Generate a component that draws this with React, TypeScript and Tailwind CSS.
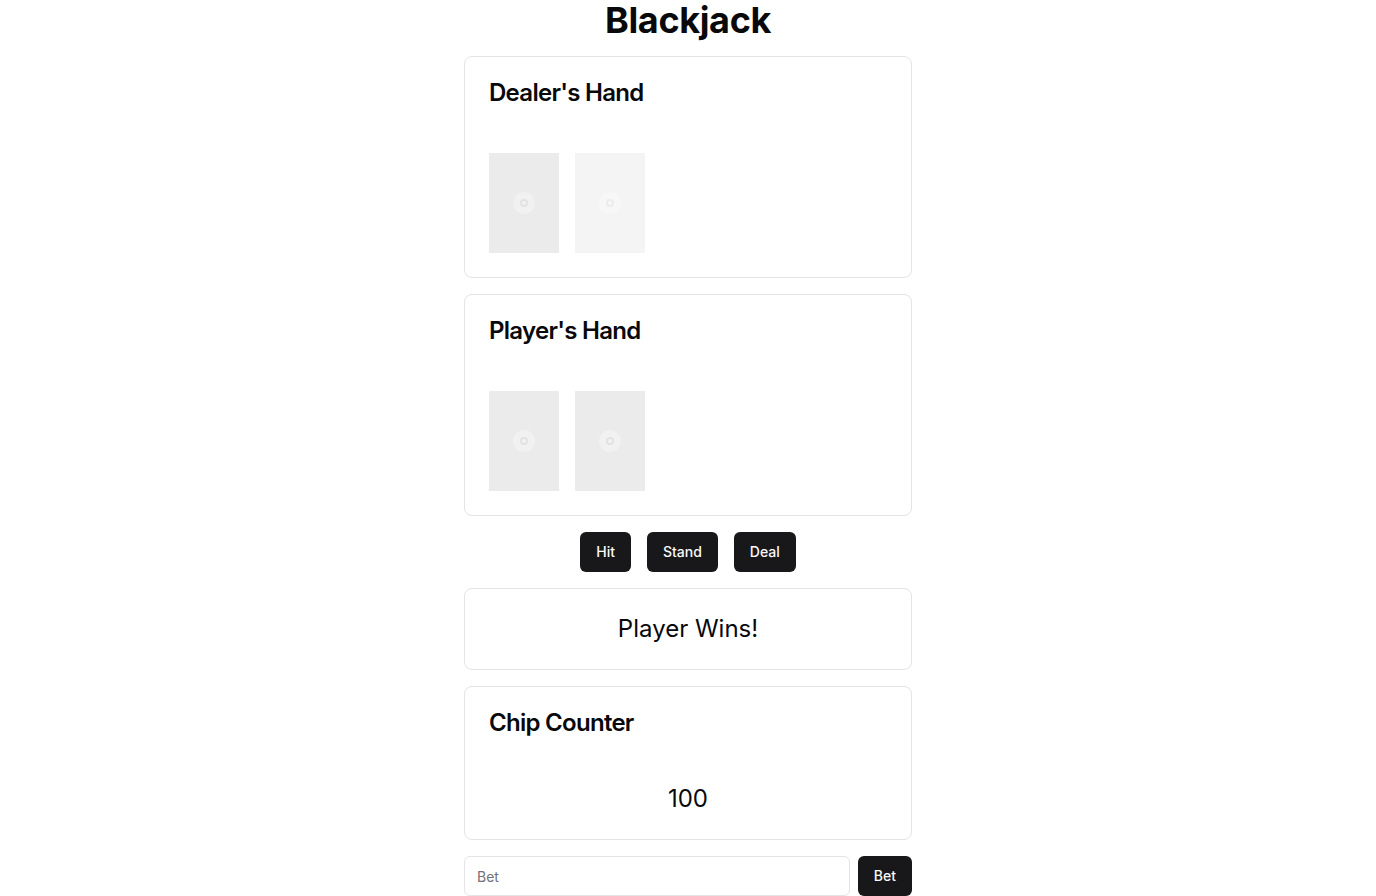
function CardSlot({ light }: { light?: boolean }) {
    return (
        <div className={`w-[70px] h-[100px] flex items-center justify-center ${light ? "bg-[#f4f4f4]" : "bg-[#ebebeb]"}`}>
            <svg width="26" height="26" viewBox="0 0 26 26">
                <circle cx="13" cy="13" r="11" fill="#ffffff" opacity={light ? 0.25 : 0.3} />
                <circle cx="13" cy="13" r="4" fill={light ? "#ececec" : "#e2e2e2"} />
                <circle cx="13" cy="13" r="2" fill={light ? "#f7f7f7" : "#f2f2f2"} />
            </svg>
        </div>
    )
}

function Hand({ title, cards }: { title: string; cards: boolean[] }) {
    return (
        <div className="border border-[#e4e4e7] rounded-lg bg-white p-6">
            <h2 className="text-2xl leading-none font-semibold tracking-[-0.03em] mb-12">{title}</h2>
            <div className="flex gap-4">
                {cards.map((c, i) => (
                    <CardSlot key={i} light={c} />
                ))}
            </div>
        </div>
    )
}

export default function App() {
    return (
        <div className="min-h-screen bg-white text-[#09090b] font-['Inter',sans-serif]">
            <div className="w-[448px] mx-auto flex flex-col">
                <h1 className="text-4xl leading-10 font-bold tracking-[-0.01em] text-center mb-4">Blackjack</h1>
                <div className="flex flex-col gap-4">
                    <Hand title="Dealer's Hand" cards={[false, true]} />
                    <Hand title="Player's Hand" cards={[false, false]} />
                    <div className="flex justify-center gap-4">
                        <button className="h-10 px-4 rounded-md bg-[#18181b] text-[#fafafa] text-sm font-medium">Hit</button>
                        <button className="h-10 px-4 rounded-md bg-[#18181b] text-[#fafafa] text-sm font-medium">Stand</button>
                        <button className="h-10 px-4 rounded-md bg-[#18181b] text-[#fafafa] text-sm font-medium">Deal</button>
                    </div>
                    <div className="border border-[#e4e4e7] rounded-lg bg-white p-6">
                        <p className="text-2xl leading-8 text-center">Player Wins!</p>
                    </div>
                    <div className="border border-[#e4e4e7] rounded-lg bg-white p-6">
                        <h2 className="text-2xl leading-none font-semibold tracking-[-0.03em] mb-12">Chip Counter</h2>
                        <p className="text-2xl leading-8 text-center">100</p>
                    </div>
                    <div className="flex gap-2">
                        <input
                            placeholder="Bet"
                            className="flex-1 h-10 rounded-md border border-[#e4e4e7] px-3 text-sm placeholder:text-[#71717a] outline-none"
                        />
                        <button className="h-10 px-4 rounded-md bg-[#18181b] text-[#fafafa] text-sm font-medium">Bet</button>
                    </div>
                </div>
            </div>
        </div>
    )
}
